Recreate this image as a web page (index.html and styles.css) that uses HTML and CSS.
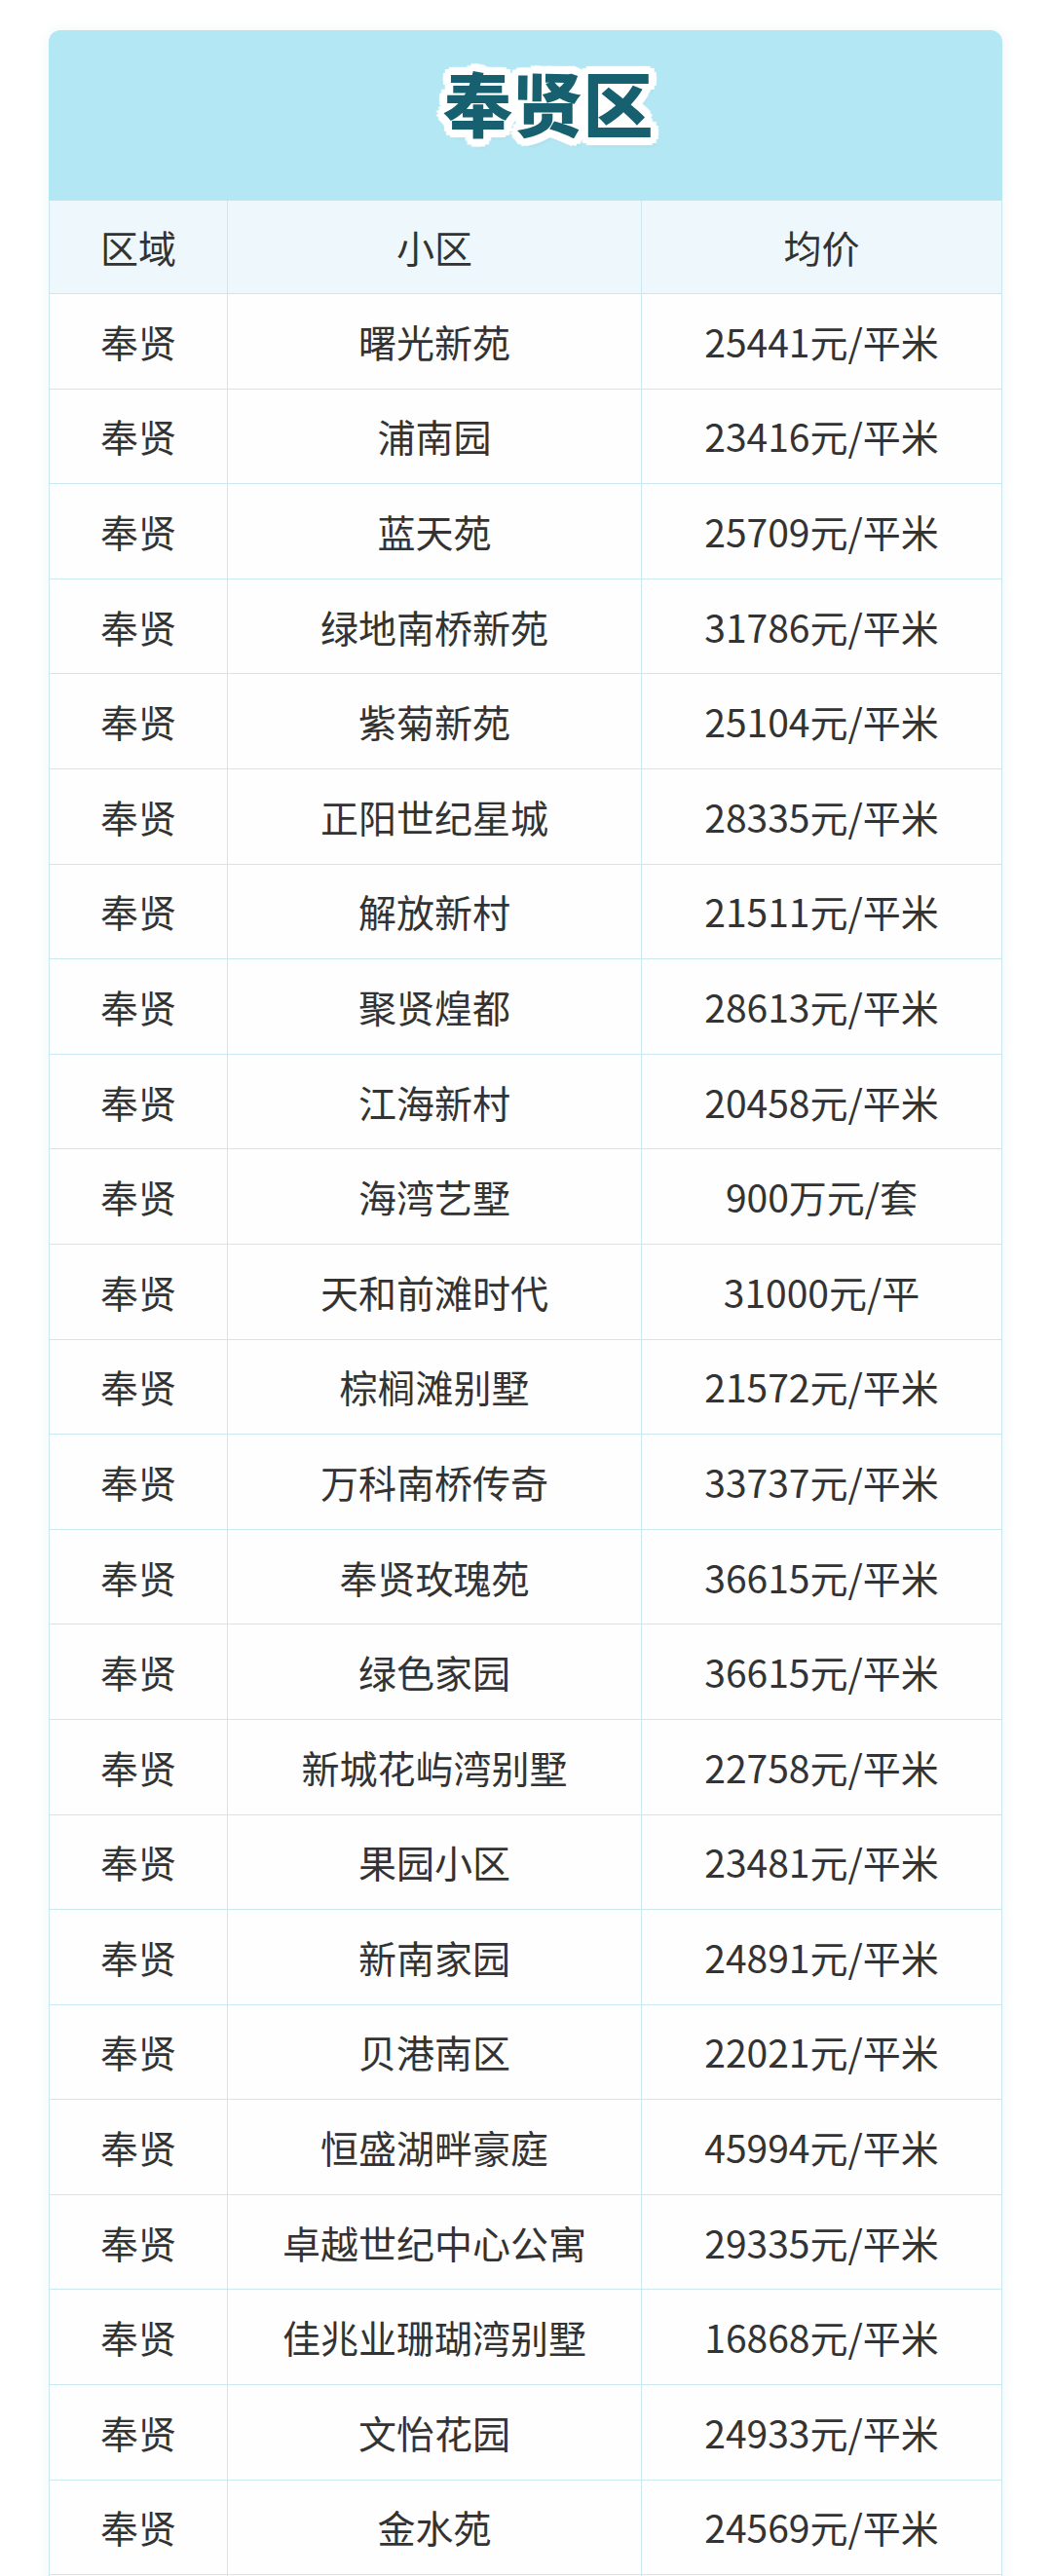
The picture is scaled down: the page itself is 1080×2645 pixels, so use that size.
FILE: index.html
```html
<!DOCTYPE html>
<html lang="zh-CN">
<head>
<meta charset="utf-8">
<title>奉贤区</title>
<link rel="stylesheet" href="styles.css">
</head>
<body>
<div class="card">
  <div class="band"><h1 class="title">奉贤区</h1></div>
  <div class="row head"><div class="c c1">区域</div><div class="c c2">小区</div><div class="c c3">均价</div></div>
  <div class="row"><div class="c c1">奉贤</div><div class="c c2">曙光新苑</div><div class="c c3">25441元/平米</div></div>
  <div class="row"><div class="c c1">奉贤</div><div class="c c2">浦南园</div><div class="c c3">23416元/平米</div></div>
  <div class="row"><div class="c c1">奉贤</div><div class="c c2">蓝天苑</div><div class="c c3">25709元/平米</div></div>
  <div class="row"><div class="c c1">奉贤</div><div class="c c2">绿地南桥新苑</div><div class="c c3">31786元/平米</div></div>
  <div class="row"><div class="c c1">奉贤</div><div class="c c2">紫菊新苑</div><div class="c c3">25104元/平米</div></div>
  <div class="row"><div class="c c1">奉贤</div><div class="c c2">正阳世纪星城</div><div class="c c3">28335元/平米</div></div>
  <div class="row"><div class="c c1">奉贤</div><div class="c c2">解放新村</div><div class="c c3">21511元/平米</div></div>
  <div class="row"><div class="c c1">奉贤</div><div class="c c2">聚贤煌都</div><div class="c c3">28613元/平米</div></div>
  <div class="row"><div class="c c1">奉贤</div><div class="c c2">江海新村</div><div class="c c3">20458元/平米</div></div>
  <div class="row"><div class="c c1">奉贤</div><div class="c c2">海湾艺墅</div><div class="c c3">900万元/套</div></div>
  <div class="row"><div class="c c1">奉贤</div><div class="c c2">天和前滩时代</div><div class="c c3">31000元/平</div></div>
  <div class="row"><div class="c c1">奉贤</div><div class="c c2">棕榈滩别墅</div><div class="c c3">21572元/平米</div></div>
  <div class="row"><div class="c c1">奉贤</div><div class="c c2">万科南桥传奇</div><div class="c c3">33737元/平米</div></div>
  <div class="row"><div class="c c1">奉贤</div><div class="c c2">奉贤玫瑰苑</div><div class="c c3">36615元/平米</div></div>
  <div class="row"><div class="c c1">奉贤</div><div class="c c2">绿色家园</div><div class="c c3">36615元/平米</div></div>
  <div class="row"><div class="c c1">奉贤</div><div class="c c2">新城花屿湾别墅</div><div class="c c3">22758元/平米</div></div>
  <div class="row"><div class="c c1">奉贤</div><div class="c c2">果园小区</div><div class="c c3">23481元/平米</div></div>
  <div class="row"><div class="c c1">奉贤</div><div class="c c2">新南家园</div><div class="c c3">24891元/平米</div></div>
  <div class="row"><div class="c c1">奉贤</div><div class="c c2">贝港南区</div><div class="c c3">22021元/平米</div></div>
  <div class="row"><div class="c c1">奉贤</div><div class="c c2">恒盛湖畔豪庭</div><div class="c c3">45994元/平米</div></div>
  <div class="row"><div class="c c1">奉贤</div><div class="c c2">卓越世纪中心公寓</div><div class="c c3">29335元/平米</div></div>
  <div class="row"><div class="c c1">奉贤</div><div class="c c2">佳兆业珊瑚湾别墅</div><div class="c c3">16868元/平米</div></div>
  <div class="row"><div class="c c1">奉贤</div><div class="c c2">文怡花园</div><div class="c c3">24933元/平米</div></div>
  <div class="row"><div class="c c1">奉贤</div><div class="c c2">金水苑</div><div class="c c3">24569元/平米</div></div>
  <div class="row"><div class="c c1"></div><div class="c c2"></div><div class="c c3"></div></div>
</div>
</body>
</html>
```
FILE: styles.css
```css
html, body {
  margin: 0;
  padding: 0;
  background: #ffffff;
}
body {
  font-family: "Noto Sans CJK SC", "Noto Sans", sans-serif;
  color: #333333;
  overflow: hidden;
  height: 2645px;
}
.card {
  margin: 31px 0 0 50px;
  width: 979px;
  border-radius: 12px 12px 0 0;
  overflow: hidden;
  box-shadow: 0 0 14px rgba(120, 170, 190, 0.12);
}
.band {
  height: 175px;
  background: #b3e7f3;
  display: flex;
  justify-content: center;
  align-items: flex-start;
}
.title {
  margin: 33px 0 0 46px;
  font-size: 72px;
  line-height: 80px;
  font-weight: 900;
  color: #17606f;
  letter-spacing: 0;
  text-shadow:
    0 0 0 #fff,
    5px 0 0 #fff, -5px 0 0 #fff, 0 5px 0 #fff, 0 -5px 0 #fff,
    4px 4px 0 #fff, -4px 4px 0 #fff, 4px -4px 0 #fff, -4px -4px 0 #fff,
    8px 2px 1px #fff, -8px 2px 1px #fff, 2px 8px 1px #fff, 2px -8px 1px #fff,
    -2px 8px 1px #fff, -2px -8px 1px #fff, 8px -2px 1px #fff, -8px -2px 1px #fff,
    6px 6px 1px #fff, -6px 6px 1px #fff, 6px -6px 1px #fff, -6px -6px 1px #fff,
    3px 7px 5px rgba(0, 60, 80, 0.15);
}
.row {
  display: grid;
  grid-template-columns: 182px 425px 1fr;
  height: 97.6px;
  box-sizing: border-box;
  border-bottom: 1px solid #cbe8f1;
  border-left: 1px solid #cbe8f1;
  border-right: 1px solid #cbe8f1;
  background: #fefefe;
}
.row.head {
  height: 96px;
  background: #eef8fc;
}
.c {
  display: flex;
  align-items: center;
  justify-content: center;
  font-size: 39px;
  line-height: 1;
  white-space: nowrap;
}
.c2, .c3 {
  border-left: 1px solid #cbe8f1;
}
```
